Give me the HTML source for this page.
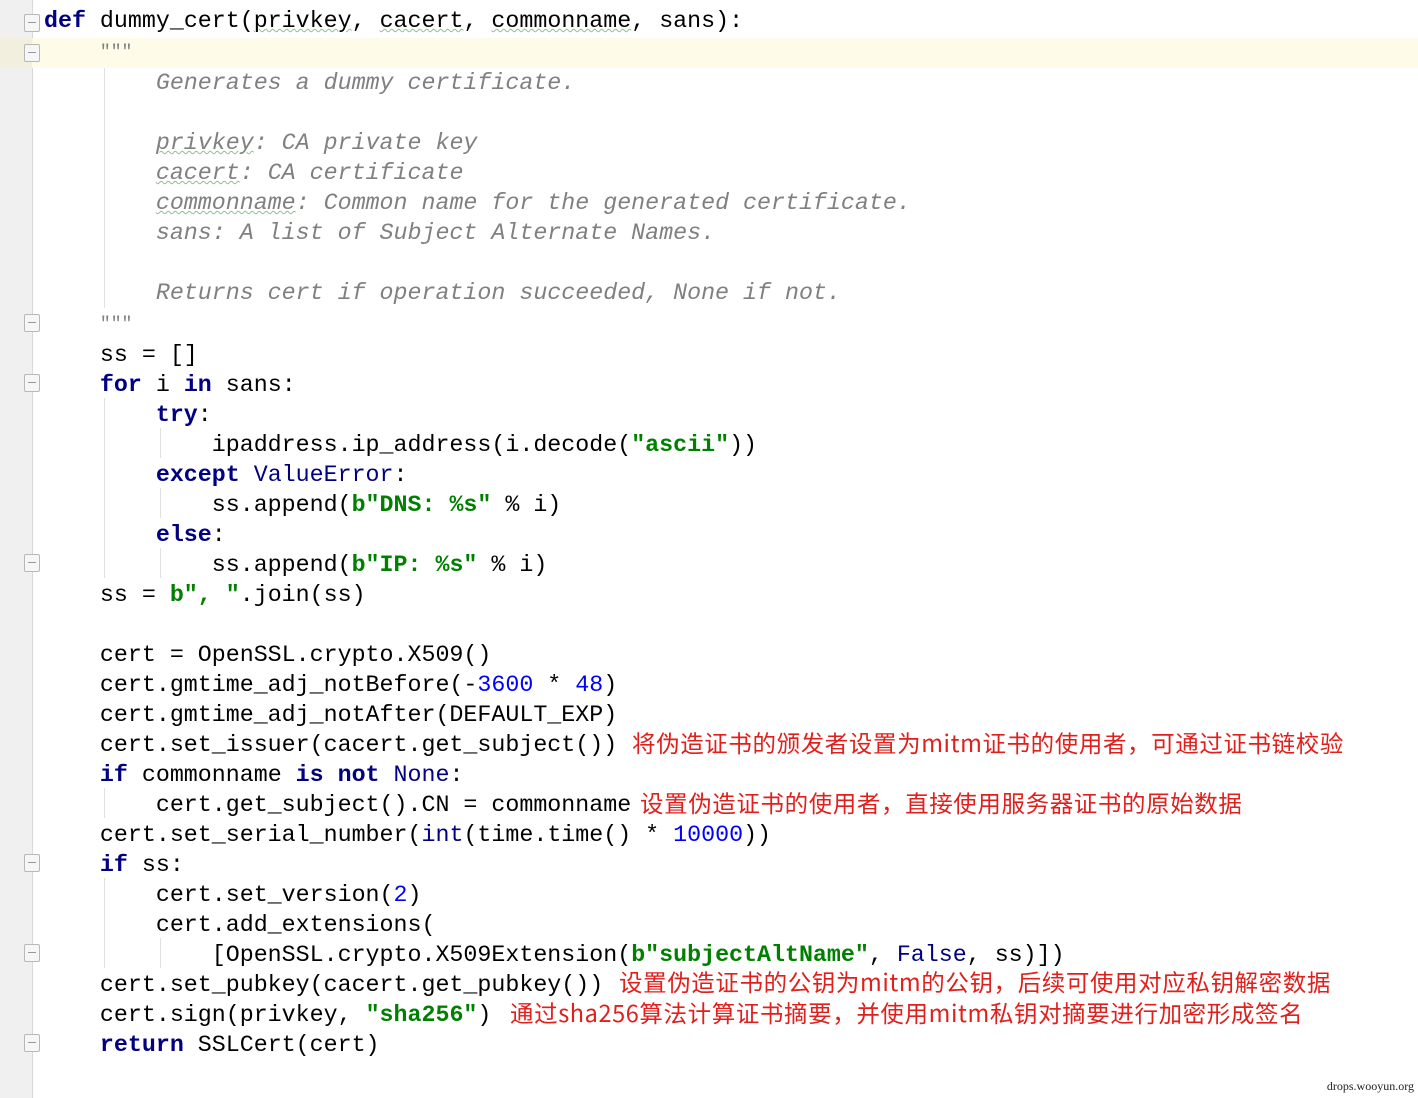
<!DOCTYPE html>
<html><head><meta charset="utf-8"><style>
body{margin:0;width:1418px;height:1098px;background:#fff;position:relative;overflow:hidden}
.g{position:absolute;left:0;top:0;width:32px;height:1098px;background:#f0f0f0;border-right:1px solid #d8d8d8}
.hl{position:absolute;left:0;top:38px;width:1418px;height:30px;background:#fefbe8}
.hl2{position:absolute;left:0;top:38px;width:32px;height:30px;background:#f3efdf}
pre{position:absolute;left:44px;top:6px;margin:0;font:23.3px/30px "Liberation Mono",monospace;color:#000}
.k{color:#000080;font-weight:bold}
.s{color:#008000;font-weight:bold}
.n{color:#0000ff}
.b{color:#000080}
.d{color:#808080;font-style:italic}
.q{color:#808080;font-size:18px}
.w{text-decoration:underline wavy #8fbf8f;text-decoration-thickness:1px}
.c{position:absolute;font:23.5px/30px "Noto Sans CJK SC",sans-serif;letter-spacing:0.6px;color:#e0201c;white-space:nowrap}
.v{position:absolute;width:1px;background:#e0e0e0}
.f{position:absolute;left:24px;width:16px;height:18px;border:1px solid #b8b8b8;background:#f6f6f6;box-sizing:border-box;border-radius:2px}
.f:after{content:"";position:absolute;left:3px;top:7px;width:8px;height:1px;background:#999}
.wm{position:absolute;right:4px;bottom:4px;font:12px "Liberation Serif",serif;color:#222}
</style></head><body>
<div class="g"></div><div class="hl"></div><div class="hl2"></div>
<div class="v" style="left:104px;top:68px;height:240px"></div>
<div class="v" style="left:104px;top:398px;height:180px"></div>
<div class="v" style="left:160px;top:428px;height:30px"></div>
<div class="v" style="left:160px;top:488px;height:30px"></div>
<div class="v" style="left:160px;top:548px;height:30px"></div>
<div class="v" style="left:104px;top:788px;height:30px"></div>
<div class="v" style="left:104px;top:878px;height:90px"></div>
<div class="v" style="left:160px;top:938px;height:30px"></div>
<div class="f" style="top:14px"></div><div class="f" style="top:44px"></div>
<div class="f" style="top:314px"></div><div class="f" style="top:374px"></div>
<div class="f" style="top:554px"></div><div class="f" style="top:854px"></div>
<div class="f" style="top:944px"></div><div class="f" style="top:1034px"></div>
<pre><span class="k">def</span> dummy_cert(<span class="w">privkey</span>, <span class="w">cacert</span>, <span class="w">commonname</span>, sans):
    <span class="q">"""</span>
        <span class="d">Generates a dummy certificate.</span>

        <span class="d"><span class="w">privkey</span>: CA private key</span>
        <span class="d"><span class="w">cacert</span>: CA certificate</span>
        <span class="d"><span class="w">commonname</span>: Common name for the generated certificate.</span>
        <span class="d">sans: A list of Subject Alternate Names.</span>

        <span class="d">Returns cert if operation succeeded, None if not.</span>
    <span class="q">"""</span>
    ss = []
    <span class="k">for</span> i <span class="k">in</span> sans:
        <span class="k">try</span>:
            ipaddress.ip_address(i.decode(<span class="s">"ascii"</span>))
        <span class="k">except</span> <span class="b">ValueError</span>:
            ss.append(<span class="s">b"DNS: %s"</span> % i)
        <span class="k">else</span>:
            ss.append(<span class="s">b"IP: %s"</span> % i)
    ss = <span class="s">b", "</span>.join(ss)

    cert = OpenSSL.crypto.X509()
    cert.gmtime_adj_notBefore(-<span class="n">3600</span> * <span class="n">48</span>)
    cert.gmtime_adj_notAfter(DEFAULT_EXP)
    cert.set_issuer(cacert.get_subject())
    <span class="k">if</span> commonname <span class="k">is not</span> <span class="b">None</span>:
        cert.get_subject().CN = commonname
    cert.set_serial_number(<span class="b">int</span>(time.time() * <span class="n">10000</span>))
    <span class="k">if</span> ss:
        cert.set_version(<span class="n">2</span>)
        cert.add_extensions(
            [OpenSSL.crypto.X509Extension(<span class="s">b"subjectAltName"</span>, <span class="b">False</span>, ss)])
    cert.set_pubkey(cacert.get_pubkey())
    cert.sign(privkey, <span class="s">"sha256"</span>)
    <span class="k">return</span> SSLCert(cert)</pre>
<div class="c" style="left:632px;top:727px">将伪造证书的颁发者设置为mitm证书的使用者，可通过证书链校验</div>
<div class="c" style="left:640px;top:787px">设置伪造证书的使用者，直接使用服务器证书的原始数据</div>
<div class="c" style="left:619px;top:966px">设置伪造证书的公钥为mitm的公钥，后续可使用对应私钥解密数据</div>
<div class="c" style="left:510px;top:997px">通过sha256算法计算证书摘要，并使用mitm私钥对摘要进行加密形成签名</div>
<div class="wm">drops.wooyun.org</div>
</body></html>
